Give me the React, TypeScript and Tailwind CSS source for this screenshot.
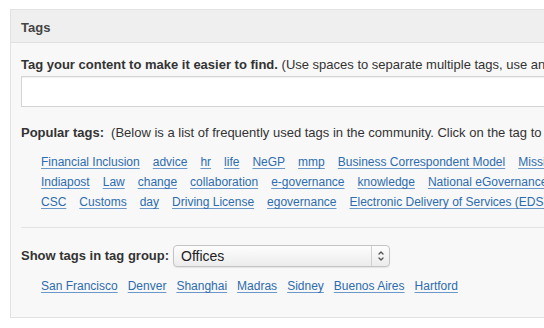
import { ChevronDown, ChevronUp } from 'lucide-react';

const rows = [
  ['Financial Inclusion', 'advice', 'hr', 'life', 'NeGP', 'mmp', 'Business Correspondent Model', 'Mission Convergence'],
  ['Indiapost', 'Law', 'change', 'collaboration', 'e-governance', 'knowledge', 'National eGovernance Plan'],
  ['CSC', 'Customs', 'day', 'Driving License', 'egovernance', 'Electronic Delivery of Services (EDS)'],
];

const offices = ['San Francisco', 'Denver', 'Shanghai', 'Madras', 'Sidney', 'Buenos Aires', 'Hartford'];

function TagLink({ label }: { label: string }) {
  return (
    <a href="#" className="text-[12px] text-[#2d6cae] underline underline-offset-[2px] decoration-[#6a98c8]">
      {label}
    </a>
  );
}

export default function App() {
  return (
    <div className="w-[544px] h-[328px] overflow-hidden bg-white font-['Liberation_Sans',Arial,sans-serif] text-[13px] text-[#333]">
      <div className="ml-[10px] mt-[9px] w-[600px] border border-[#e2e2e2] bg-[#f8f8f8]">
        {/* header */}
        <div className="h-[33px] flex items-center px-[10px] pt-[3px] bg-[#efefef] border-b border-[#e0e0e0]">
          <span className="font-bold text-[#444]">Tags</span>
        </div>

        <div className="px-[10px] pt-[14px] pb-[23px]">
          <p className="whitespace-nowrap leading-[16px]">
            <span className="font-bold">Tag your content to make it easier to find.</span>{' '}
            (Use spaces to separate multiple tags, use an underscore to join words)
          </p>
          <div className="mt-[3px] h-[31px] bg-white border border-[#d4d4d4] shadow-[inset_0_1px_1px_rgba(0,0,0,0.06)]" />

          <p className="mt-[18px] whitespace-nowrap leading-[16px]">
            <span className="font-bold">Popular tags:</span>
            <span className="ml-[7px]">(Below is a list of frequently used tags in the community. Click on the tag to add it)</span>
          </p>

          <div className="mt-[13px] pl-[20px] flex flex-col gap-y-[4px]">
            {rows.map((row, i) => (
              <div key={i} className="flex gap-x-[13px] whitespace-nowrap leading-[16px]">
                {row.map((t) => (
                  <TagLink key={t} label={t} />
                ))}
              </div>
            ))}
          </div>

          <div className="mt-[17px] border-t border-[#e3e3e3]" />

          <div className="mt-[17px] flex items-center">
            <span className="font-bold whitespace-nowrap">Show tags in tag group:</span>
            <div className="ml-[4px] w-[217px] h-[22px] flex items-center rounded-[4px] border border-[#c4c4c4] bg-gradient-to-b from-[#fdfdfd] to-[#ececec] shadow-[0_1px_1px_rgba(0,0,0,0.08)]">
              <span className="flex-1 pl-[7px] text-[14px] text-[#222]">Offices</span>
              <div className="w-[18px] h-full border-l border-[#d0d0d0] flex flex-col items-center justify-center">
                <ChevronUp size={8} strokeWidth={4} className="text-[#555] -mb-[1px]" />
                <ChevronDown size={8} strokeWidth={4} className="text-[#555] -mt-[1px]" />
              </div>
            </div>
          </div>

          <div className="mt-[11px] pl-[20px] flex gap-x-[10px] whitespace-nowrap leading-[16px]">
            {offices.map((o) => (
              <TagLink key={o} label={o} />
            ))}
          </div>
        </div>
      </div>
    </div>
  );
}
